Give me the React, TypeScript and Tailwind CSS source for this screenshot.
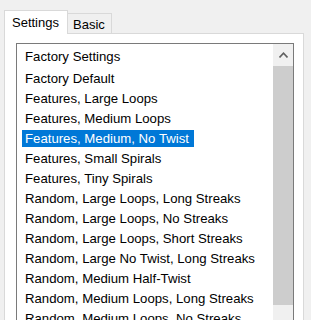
import React from "react";

const rows = [
  "Factory Default",
  "Features, Large Loops",
  "Features, Medium Loops",
  "Features, Medium, No Twist",
  "Features, Small Spirals",
  "Features, Tiny Spirals",
  "Random, Large Loops, Long Streaks",
  "Random, Large Loops, No Streaks",
  "Random, Large Loops, Short Streaks",
  "Random, Large No Twist, Long Streaks",
  "Random, Medium Half-Twist",
  "Random, Medium Loops, Long Streaks",
  "Random, Medium Loops, No Streaks",
  "Random, Medium Loops, Short Streaks",
];

export default function App() {
  return (
    <div className="w-[311px] h-[320px] overflow-hidden bg-[#f0f0f0] pt-[10px] pl-[4px] pr-[7px] font-['Liberation_Sans',Arial,sans-serif] text-[13px] text-black flex flex-col">
      <div className="flex items-end h-[24px] shrink-0">
        <div className="relative z-10 w-[64px] h-[24px] bg-white border-l border-t border-r border-[#d9d9d9] pl-[7px] pt-[3px] leading-[17px]">
          Settings
        </div>
        <div className="-ml-px w-[45px] h-[21px] bg-[#f0f0f0] border-l border-t border-r border-[#d9d9d9] pl-[5px] pt-[2px] leading-[17px]">
          Basic
        </div>
      </div>
      <div className="-mt-px flex-1 bg-white border border-[#d9d9d9] pt-[9px] pl-[11px] pr-[9px]">
        <div className="h-[300px] border border-[#7a7a7a] flex">
          <div className="flex-1 text-[13.2px]">
            <div className="pt-[4px] pl-[8px] h-[25px] leading-[17px]">Factory Settings</div>
            {rows.map((r, i) => (
              <div key={r} className="h-[20px]">
                <span
                  className={
                    i === 3
                      ? "inline-block ml-[5px] h-[17px] leading-[17px] pl-[3px] pr-[5px] bg-[#0078d7] text-white whitespace-nowrap"
                      : "inline-block ml-[5px] h-[17px] leading-[17px] pl-[3px] pr-[5px] whitespace-nowrap"
                  }
                >
                  {r}
                </span>
              </div>
            ))}
          </div>
          <div className="w-[20px] bg-[#f0f0f0] flex flex-col">
            <div className="h-[22px] flex items-center justify-center">
              <svg width="9" height="6" viewBox="0 0 9 6">
                <polyline points="0.5,5.5 4.5,1.2 8.5,5.5" fill="none" stroke="#606060" strokeWidth="1.6" />
              </svg>
            </div>
            <div className="h-[239px] bg-[#cdcdcd]" />
          </div>
        </div>
      </div>
    </div>
  );
}
